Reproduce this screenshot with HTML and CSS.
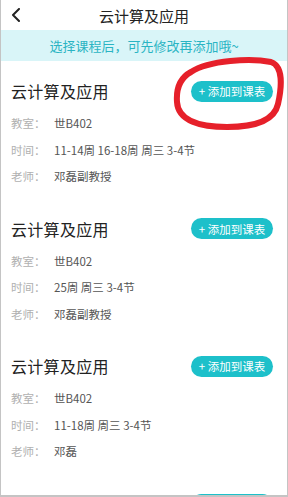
FILE: index.html
```html
<!DOCTYPE html>
<html lang="zh">
<head>
<meta charset="utf-8">
<link rel="stylesheet" href="styles.css">
</head>
<body>
<div class="screen">
  <header class="topbar">
    <svg class="back" width="10" height="14" viewBox="0 0 10 14"><polyline points="8,1 2,7 8,13" fill="none" stroke="#222" stroke-width="2" stroke-linecap="round" stroke-linejoin="round"/></svg>
    <div class="title">云计算及应用</div>
  </header>
  <div class="banner">选择课程后，可先修改再添加哦~</div>

  <div class="card">
    <div class="card-head">
      <div class="name">云计算及应用</div>
      <button class="add">+ 添加到课表</button>
    </div>
    <div class="row"><span class="label">教室：</span><span class="value">世B402</span></div>
    <div class="row"><span class="label">时间：</span><span class="value">11-14周 16-18周 周三 3-4节</span></div>
    <div class="row"><span class="label">老师：</span><span class="value">邓磊副教授</span></div>
  </div>

  <div class="card">
    <div class="card-head">
      <div class="name">云计算及应用</div>
      <button class="add">+ 添加到课表</button>
    </div>
    <div class="row"><span class="label">教室：</span><span class="value">世B402</span></div>
    <div class="row"><span class="label">时间：</span><span class="value">25周 周三 3-4节</span></div>
    <div class="row"><span class="label">老师：</span><span class="value">邓磊副教授</span></div>
  </div>

  <div class="card">
    <div class="card-head">
      <div class="name">云计算及应用</div>
      <button class="add">+ 添加到课表</button>
    </div>
    <div class="row"><span class="label">教室：</span><span class="value">世B402</span></div>
    <div class="row"><span class="label">时间：</span><span class="value">11-18周 周三 3-4节</span></div>
    <div class="row"><span class="label">老师：</span><span class="value">邓磊</span></div>
  </div>

  <div class="card">
    <div class="card-head peek">
      <span class="add add-peek" aria-hidden="true"></span>
    </div>
  </div>

  <svg class="circle" width="116" height="78" viewBox="0 0 116 78">
    <path d="M20,16 C38,4 80,2 100,6 C112,10 111,30 107,48 C103,66 80,71 56,71 C30,71 7,65 6,46 C5,32 9,22 20,16 Z" fill="none" stroke="#e6202a" stroke-width="6" stroke-linejoin="round"/>
  </svg>
</div>
</body>
</html>
```

FILE: styles.css
```css
* { box-sizing: border-box; }
html, body { margin: 0; padding: 0; }
body {
  font-family: "Noto Sans CJK SC", "Noto Sans", sans-serif;
  background: #fff;
}
.screen {
  position: relative;
  width: 288px;
  height: 497px;
  overflow: hidden;
  border-left: 1px solid #c4c4c4;
  border-right: 1px solid #c4c4c4;
  border-bottom: 2px solid #c4c4c4;
  background: #fff;
}
.topbar {
  position: relative;
  height: 30px;
  display: flex;
  align-items: center;
  justify-content: center;
}
.back {
  position: absolute;
  left: 10px;
  top: 8px;
}
.title {
  font-size: 15px;
  color: #222;
}
.banner {
  height: 31px;
  background: #d9f5f8;
  color: #2ab4c3;
  font-size: 13px;
  display: flex;
  align-items: center;
  justify-content: center;
}
.card {
  padding: 19px 14px 9px 10px;
  height: 137.5px;
}
.card-head {
  height: 22px;
  display: flex;
  align-items: center;
  justify-content: space-between;
  margin-bottom: 8px;
}
.card-head.peek {
  justify-content: flex-end;
}
.name {
  font-size: 16px;
  line-height: 22px;
  color: #222;
  letter-spacing: 0.3px;
}
.add {
  border: none;
  background: #1dc0ca;
  color: #fff;
  font-family: inherit;
  font-size: 11.5px;
  height: 21px;
  width: 82px;
  border-radius: 11px;
  padding: 0;
  display: flex;
  align-items: center;
  justify-content: center;
}
.add-peek {
  margin-top: 1px;
}
.row {
  height: 26.5px;
  display: flex;
  align-items: center;
  font-size: 11.5px;
}
.label {
  width: 43px;
  color: #b0b0b0;
}
.value {
  color: #555;
}
.circle {
  position: absolute;
  left: 170px;
  top: 56px;
}
```
